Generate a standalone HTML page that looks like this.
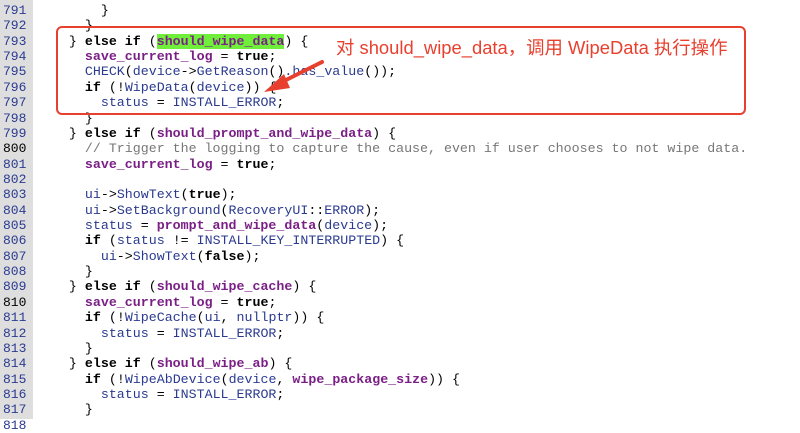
<!DOCTYPE html>
<html><head><meta charset="utf-8"><style>
body{margin:0;width:800px;height:419px;background:#fff;overflow:hidden;position:relative;font-family:"Liberation Mono",monospace}
.g{position:absolute;left:0;top:0;width:33px;height:419px;background:#dedede}
.ln{position:absolute;left:3px;top:3px;font-size:13px;line-height:15.36px;color:#2a3a90;white-space:pre}
.cd{position:absolute;left:37px;top:3px;font-size:13.3px;line-height:15.36px;color:#2a3a90;white-space:pre}
b{color:#000}.p{color:#7a1f86;font-weight:bold}.k{color:#000}.c{color:#777}
.hl{background:#6fee3a}
.d{color:#000}
.box{position:absolute;left:56px;top:26px;width:686px;height:85px;border:2.5px solid #e8402e;border-radius:6px}
.t{position:absolute;left:336px;top:34px;font-family:"Liberation Sans","Noto Sans CJK SC",sans-serif;font-size:18.4px;color:#e8402e;white-space:pre}
</style></head><body>
<div class="g"></div>
<div class="ln">791
792
793
794
795
796
797
798
799
<span class="d">800</span>
801
802
803
804
805
806
807
808
809
<span class="d">810</span>
811
812
813
814
815
816
817
818</div>
<div class="cd">        <span class="k">}</span>
      <span class="k">}</span>
    <span class="k">}</span> <b>else if</b> <span class="k">(</span><span class="p hl">should_wipe_data</span><span class="k">) {</span>
      <span class="p">save_current_log</span> <span class="k">=</span> <b>true</b><span class="k">;</span>
      CHECK<span class="k">(</span>device<span class="k">-></span>GetReason<span class="k">()</span>.has_value<span class="k">());</span>
      <b>if</b> <span class="k">(!</span>WipeData<span class="k">(</span>device<span class="k">)) {</span>
        status <span class="k">=</span> INSTALL_ERROR<span class="k">;</span>
      <span class="k">}</span>
    <span class="k">}</span> <b>else if</b> <span class="k">(</span><span class="p">should_prompt_and_wipe_data</span><span class="k">) {</span>
      <span class="c">// Trigger the logging to capture the cause, even if user chooses to not wipe data.</span>
      <span class="p">save_current_log</span> <span class="k">=</span> <b>true</b><span class="k">;</span>

      ui<span class="k">-></span>ShowText<span class="k">(</span><b>true</b><span class="k">);</span>
      ui<span class="k">-></span>SetBackground<span class="k">(</span>RecoveryUI<span class="k">::</span>ERROR<span class="k">);</span>
      status <span class="k">=</span> <span class="p">prompt_and_wipe_data</span><span class="k">(</span>device<span class="k">);</span>
      <b>if</b> <span class="k">(</span>status <span class="k">!=</span> INSTALL_KEY_INTERRUPTED<span class="k">) {</span>
        ui<span class="k">-></span>ShowText<span class="k">(</span><b>false</b><span class="k">);</span>
      <span class="k">}</span>
    <span class="k">}</span> <b>else if</b> <span class="k">(</span><span class="p">should_wipe_cache</span><span class="k">) {</span>
      <span class="p">save_current_log</span> <span class="k">=</span> <b>true</b><span class="k">;</span>
      <b>if</b> <span class="k">(!</span>WipeCache<span class="k">(</span>ui<span class="k">,</span> nullptr<span class="k">)) {</span>
        status <span class="k">=</span> INSTALL_ERROR<span class="k">;</span>
      <span class="k">}</span>
    <span class="k">}</span> <b>else if</b> <span class="k">(</span><span class="p">should_wipe_ab</span><span class="k">) {</span>
      <b>if</b> <span class="k">(!</span>WipeAbDevice<span class="k">(</span>device<span class="k">,</span> <span class="p">wipe_package_size</span><span class="k">)) {</span>
        status <span class="k">=</span> INSTALL_ERROR<span class="k">;</span>
      <span class="k">}</span></div>
<div class="box"></div>
<div class="t">对 should_wipe_data，调用 WipeData 执行操作</div>
<svg style="position:absolute;left:0;top:0" width="800" height="419">
<path d="M322 62 L282 82" stroke="#e8402e" stroke-width="4" stroke-linecap="round"/>
<path d="M264 92 L284 74 L290 88 Z" fill="#e8402e"/>
</svg>
</body></html>
